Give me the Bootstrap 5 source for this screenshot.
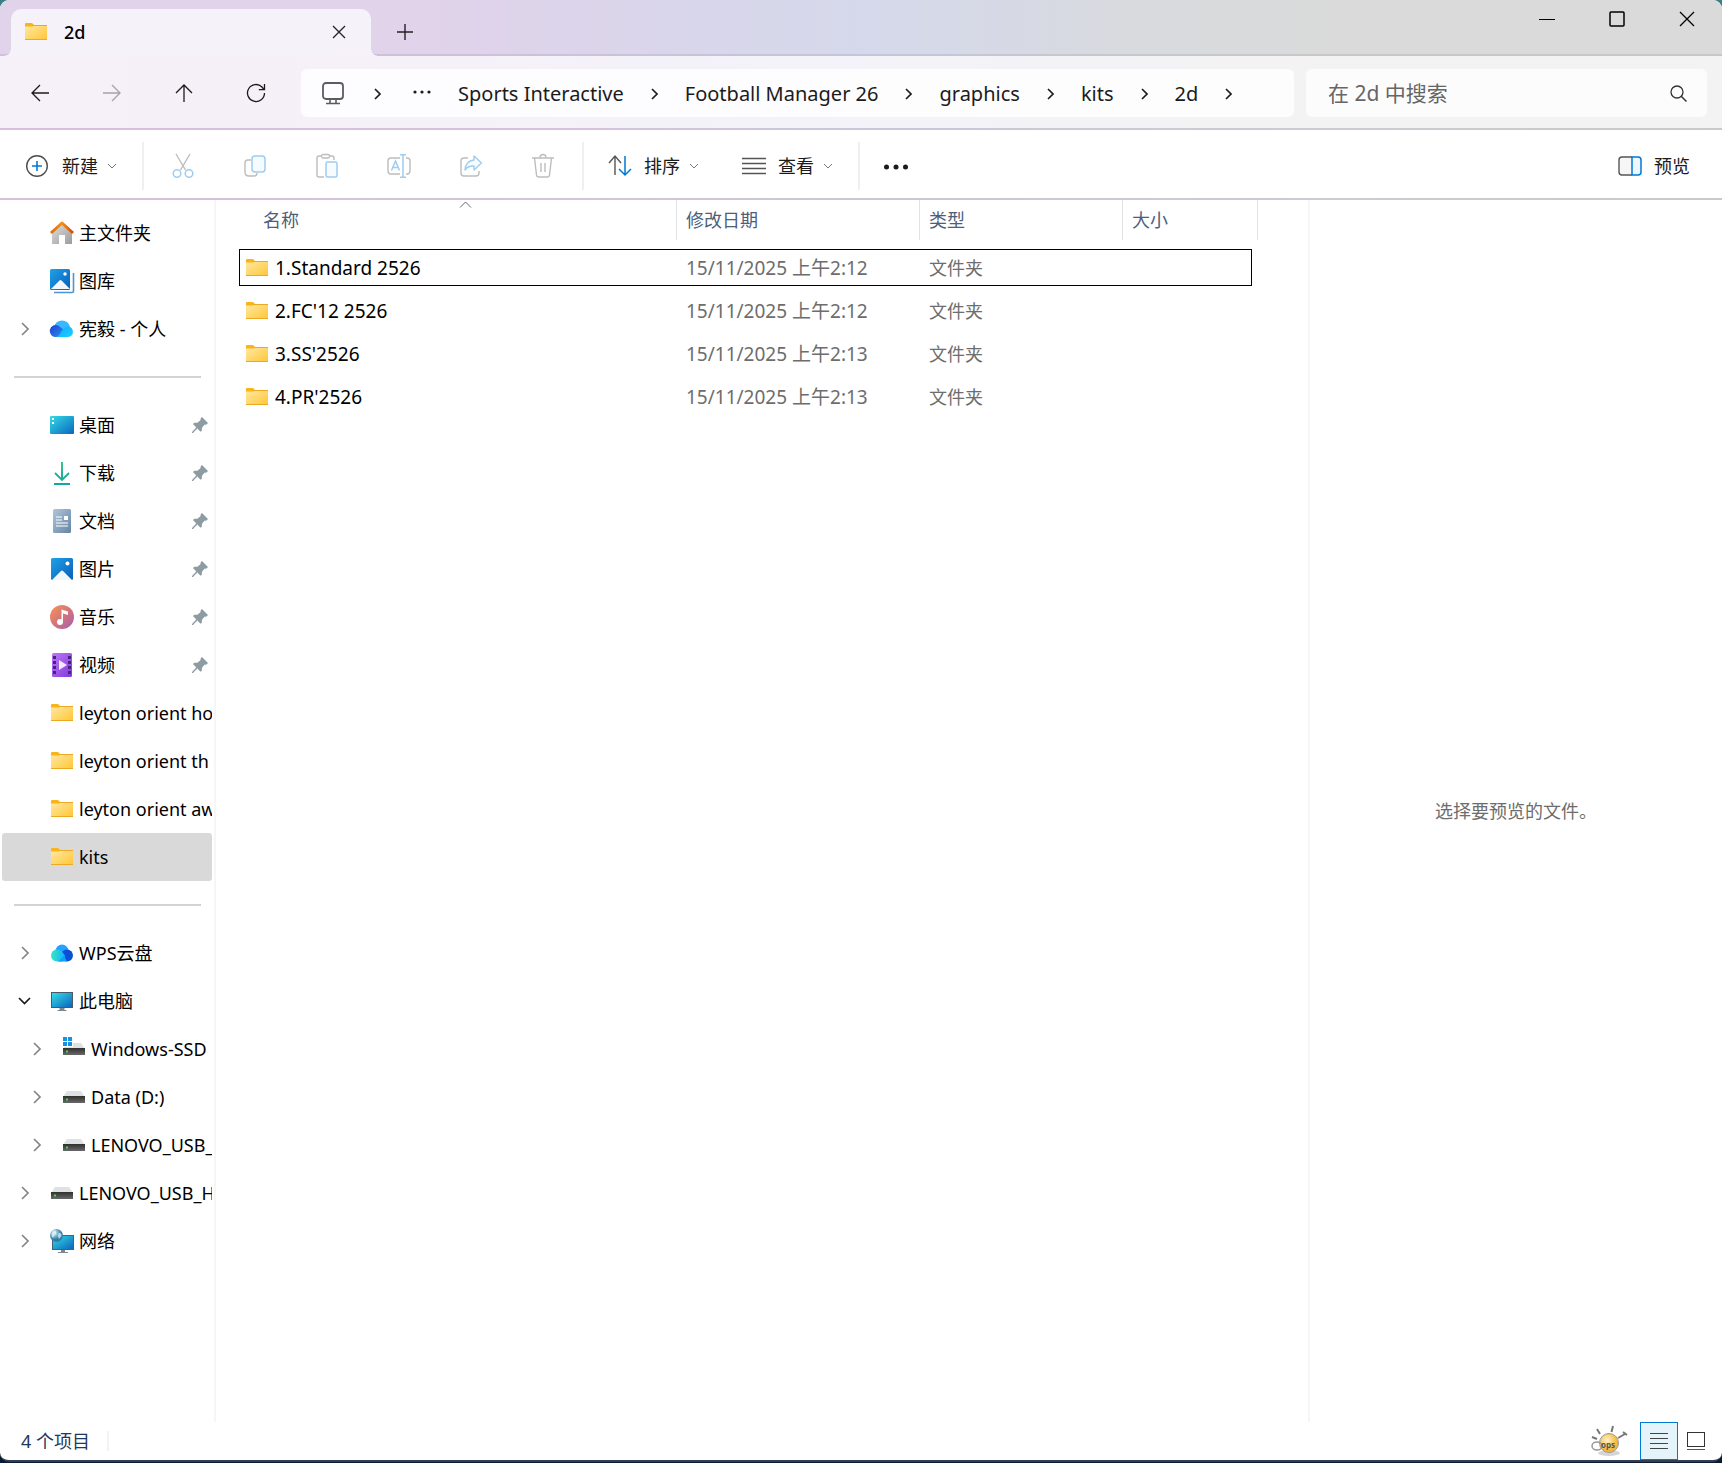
<!DOCTYPE html>
<html lang="zh-CN">
<head>
<meta charset="utf-8">
<meta name="viewport" content="width=device-width, initial-scale=1">
<title>2d</title>
<link rel="stylesheet" href="https://cdn.jsdelivr.net/npm/bootstrap@5.3.0/dist/css/bootstrap.min.css">
<style>
:root{--ui:"Noto Sans","Noto Sans CJK SC",sans-serif}
body{font-family:var(--ui);font-size:18px;line-height:24px;color:#000;background:linear-gradient(#3a7f86,#0b1a33 80%)}
svg{display:block;flex:none;overflow:visible}
.desk{min-height:100vh}
.win{background:#fff;border-radius:9px;overflow:hidden;margin-bottom:1px;border-bottom:2px solid #333f50}
.plain{background:none;border:0;padding:0;color:#1b1b1b}
.tabstrip{height:56px;background:linear-gradient(90deg,#e1d3ea 0,#e0d3ea 25%,#d9d6ea 40%,#d5d9eb 51%,#d8dade 66%,#dadada 78%);box-shadow:inset 0 -2px rgba(90,60,100,.12)}
.tabitem{width:360px;height:47px;margin-left:11px;background:#f5f2f9;border-radius:10px 10px 0 0;position:relative;padding:0 25px 1px 13px}
.tabitem::before,.tabitem::after{content:"";position:absolute;bottom:0;width:6px;height:6px}
.tabitem::before{left:-6px;background:radial-gradient(circle at 0 0,transparent 5px,#f5f2f9 6px)}
.tabitem::after{right:-6px;background:radial-gradient(circle at 100% 0,transparent 5px,#f5f2f9 6px)}
.tabname{font-weight:500}
.newtab{margin-left:26px}
.wbtn{width:70px;height:37px}
.navrow{height:74px;background:linear-gradient(90deg,#f6f0f8 0,#f5f1f9 25%,#f3f3f9 50%,#f3f3f3 78%);padding:2px 15px 0 4px}
.navrow,.toolrow{border-bottom:2px solid;border-image:linear-gradient(90deg,#d8bfdb 0,#d6c2dc 33%,#c8c8d8 52%,#c8ccd2 70%,#cacacc) 1}
.toolrow{height:70px;padding:4px 32px 0 26px}
.ibtn{width:72px;height:48px}
.addr{height:48px;background:rgba(255,255,255,.78);border-radius:6px;padding:2px 0 0 21px;margin:0 12px 0 9px;font-size:20px}
.addr a{color:#1b1b1b;text-decoration:none;white-space:nowrap}
.addr .gap-chev{margin:0 27px}
.dots{margin:0 27px}
.seek{width:401px;height:48px;background:#fcfcfc;border-radius:6px;padding:0 20px 0 22px}
.seek input{border:0;background:none;padding:0;outline:0;font-size:21px;min-width:0;color:#1b1b1b}
.seek input::placeholder{color:#666;opacity:1}
.vbar{width:2px;height:48px;background:#efefef}
.wide{margin-left:26px}
.tight{margin-left:3px}
.tlabel{margin:0 10px 0 14px}
.slabel{margin:0 10px 0 12px}
.viewb{margin-left:44px}
.side{width:216px;padding:9px 2px 0;border-right:2px solid #f6f6f6}
.side li{height:48px}
.side a{height:48px;color:#000;text-decoration:none;overflow:hidden;border-radius:3px;padding-right:4px;white-space:nowrap}
.side a.here{background:#d9d9d9}
.chev{width:48px;padding-left:19px;flex:none}
.chev.open{padding-left:16px}
.sub .chev{width:60px;padding-left:31px}
.ic{width:24px;margin-right:5px}
.side a.clip{padding-right:0}
.side hr{margin:0 11px 0 12px;border-top:2px solid #d3d3d3;opacity:1}
.listing{padding-left:20px}
.files{width:1019px;table-layout:fixed;border-collapse:collapse}
.c1{width:441px}.c2{width:243px}.c3{width:203px}.c4{width:132px}
.files th{padding:0 0 6px;font-weight:400;color:#4c607a}
.hcell{height:40px;border-right:1px solid #e3e3e3;padding-left:9px;position:relative}
.hfirst{margin-left:18px}
.hlast{margin-right:-3px}
.caret{position:absolute;left:50%;top:1px;margin-left:-5px}
.files td{height:43px;padding:0 0 0 9px;color:#6d6d6d;font-size:19px}
.files td.nm{color:#000}
.files .nm .ic{margin-right:6px}
.files td.kind{font-size:18px}
.files tr.focus{outline:1px solid #000;outline-offset:-4px}
.pane{width:414px;border-left:2px solid #f6f6f6;color:#6d6d6d}
.stat{height:38px;color:#1e395b;padding:0 17px 0 21px}
.stat .tick{width:2px;height:20px;background:#f3f3f3;margin-left:17px}
.oops{margin-right:12px}
.vbtn{width:38px;height:38px;margin-right:9px}
.vbtn.on{background:#e5f3fb;border:1px solid #0078d4}
</style>
</head>
<body>
<svg width="0" height="0" class="position-absolute" aria-hidden="true">
<defs>
<linearGradient id="gf" x1="0" y1="0" x2="1" y2="1"><stop offset="0" stop-color="#ffe9a6"/><stop offset="1" stop-color="#ffc634"/></linearGradient>
<linearGradient id="gb" x1="0" y1="0" x2="1" y2="1"><stop offset="0" stop-color="#1fa2e8"/><stop offset="1" stop-color="#0a5db8"/></linearGradient>
<linearGradient id="gt" x1="0" y1="0" x2="1" y2="1"><stop offset="0" stop-color="#35dbe6"/><stop offset="1" stop-color="#0a66bd"/></linearGradient>
<linearGradient id="gg" x1="0" y1="0" x2="0" y2="1"><stop offset="0" stop-color="#3ac28c"/><stop offset="1" stop-color="#10a6a0"/></linearGradient>
<linearGradient id="gd" x1="0" y1="0" x2="1" y2="1"><stop offset="0" stop-color="#b2c6da"/><stop offset="1" stop-color="#6484a4"/></linearGradient>
<linearGradient id="gm" x1="0" y1="0" x2="1" y2="1"><stop offset="0" stop-color="#f99555"/><stop offset=".5" stop-color="#d67478"/><stop offset="1" stop-color="#a05fb5"/></linearGradient>
<linearGradient id="gv" x1="0" y1="0" x2="1" y2="1"><stop offset="0" stop-color="#bb79f5"/><stop offset="1" stop-color="#8238dd"/></linearGradient>
<linearGradient id="gh" x1="0" y1="0" x2="1" y2="1"><stop offset="0" stop-color="#dedede"/><stop offset="1" stop-color="#9b9b9b"/></linearGradient>
<linearGradient id="gr" x1="0" y1="0" x2="1" y2="0"><stop offset="0" stop-color="#e06a12"/><stop offset=".5" stop-color="#fa8c12"/><stop offset="1" stop-color="#d24a0e"/></linearGradient>
<linearGradient id="gc" x1="0" y1="0" x2="1" y2="0"><stop offset="0" stop-color="#38e6c0"/><stop offset="1" stop-color="#12b2ff"/></linearGradient>
<linearGradient id="gk" x1="0" y1="0" x2="0" y2="1"><stop offset="0" stop-color="#2f2f2f"/><stop offset="1" stop-color="#6a6a6a"/></linearGradient>
<linearGradient id="go" x1="0" y1="0" x2="1" y2="1"><stop offset="0" stop-color="#1d43c8"/><stop offset="1" stop-color="#2e8cff"/></linearGradient>
<linearGradient id="gp" x1="0" y1="0" x2="1" y2="1"><stop offset="0" stop-color="#18a4ff"/><stop offset="1" stop-color="#14d4ff"/></linearGradient>
<radialGradient id="gball" cx=".4" cy=".35"><stop offset="0" stop-color="#fff3c8"/><stop offset="1" stop-color="#f4b840"/></radialGradient>
<radialGradient id="gglobe" cx=".35" cy=".3"><stop offset="0" stop-color="#d8f0fa"/><stop offset="1" stop-color="#2e7fa8"/></radialGradient>
</defs>
<symbol id="folder" viewBox="0 0 24 24"><path d="M1 4q0-1 1-1h6l2 2v3H1z" fill="#f9b516"/><path d="M1 6.500h8l1-1.500h13v15H1z" fill="url(#gf)"/><path d="M9 5.500h14M1 19.500h22" stroke="#eba924"/></symbol>
<symbol id="right" viewBox="0 0 8 14"><path d="M1 1l6 6-6 6" fill="none" stroke="#858585" stroke-width="1.600"/></symbol>
<symbol id="crumb" viewBox="0 0 7 12"><path d="M1 1l5 5-5 5" fill="none" stroke="#1b1b1b" stroke-width="1.600"/></symbol>
<symbol id="dropd" viewBox="0 0 8 6"><path d="M0 1l4 4 4-4" fill="none" stroke="#777"/></symbol>
<symbol id="pin" viewBox="0 0 16 16"><path d="M10 0l6 6-1.500 1.500-2 .3-2.500 3-.2 3-1.300 1L5.300 11.500 1 16H0v-1l4.300-4.500L1 7l1.300-1.200h3l3.200-2.600.2-2z" fill="#8f9ba3"/></symbol>
<symbol id="drive" viewBox="0 0 24 24"><path d="M5 6h14l4 6H1z" fill="#dfe1e4"/><path d="M1 11h22v7H1z" fill="url(#gk)"/><path d="M4 13.500h2v2H4z" fill="#35e03a"/></symbol>
<symbol id="screen" viewBox="0 0 24 24"><path d="M1 3h22v16H1z" fill="#4b5a68"/><path d="M2 4h20v14H2z" fill="url(#gt)"/><path d="M9.500 19h5v2h2v1h-9v-1h2z" fill="#7c8790"/></symbol>
<symbol id="pic" viewBox="0 0 24 24"><rect x="1" y="1" width="22" height="22" rx="1.500" fill="url(#gb)"/><path d="M2 23l9-9q1-1 2 0l9 9z" fill="#f1f7fd"/><circle cx="17.500" cy="6.500" r="2" fill="#fff"/></symbol>
</svg>

<div class="desk d-flex flex-column">
<div class="win d-flex flex-column flex-grow-1">

<header>
<div class="tabstrip d-flex align-items-end">
  <div class="tabitem d-flex align-items-center">
    <svg width="24" height="24"><use href="#folder"/></svg>
    <span class="tabname ms-3 flex-grow-1">2d</span>
    <button class="plain" aria-label="关闭标签页"><svg width="14" height="14"><path d="M1 1l12 12M13 1L1 13" stroke="#222" stroke-width="1.300"/></svg></button>
  </div>
  <button class="plain newtab pb-3" aria-label="新标签页"><svg width="16" height="16"><path d="M8 0v16M0 8h16" stroke="#222" stroke-width="1.400"/></svg></button>
  <div class="ms-auto d-flex align-self-start">
    <button class="wbtn plain d-flex align-items-center justify-content-center" aria-label="最小化"><svg width="16" height="16"><path d="M0 8.500h16" stroke="#000"/></svg></button>
    <button class="wbtn plain d-flex align-items-center justify-content-center" aria-label="最大化"><svg width="16" height="16"><rect x="1" y="1" width="14" height="14" rx="1" fill="none" stroke="#000" stroke-width="1.500"/></svg></button>
    <button class="wbtn plain d-flex align-items-center justify-content-center" aria-label="关闭"><svg width="16" height="16"><path d="M1 1l14 14M15 1L1 15" stroke="#000" stroke-width="1.300"/></svg></button>
  </div>
</div>

<div class="navrow d-flex align-items-center">
  <div class="d-flex">
    <button class="ibtn plain d-flex align-items-center justify-content-center" aria-label="后退"><svg width="18" height="18"><path d="M9 1L1 9l8 8M1 9h17" fill="none" stroke="#1b1b1b" stroke-width="1.300"/></svg></button>
    <button class="ibtn plain d-flex align-items-center justify-content-center" aria-label="前进" disabled><svg width="18" height="18"><path d="M9 1l8 8-8 8M17 9H0" fill="none" stroke="#a5a1a7" stroke-width="1.300"/></svg></button>
    <button class="ibtn plain d-flex align-items-center justify-content-center" aria-label="向上"><svg width="18" height="18"><path d="M1 9l8-8 8 8M9 1v17" fill="none" stroke="#1b1b1b" stroke-width="1.300"/></svg></button>
    <button class="ibtn plain d-flex align-items-center justify-content-center" aria-label="刷新"><svg width="18" height="18"><path d="M17.500 9A8.500 8.500 0 1 1 15 3l2 2.500M17.500 0v5.700h-5.700" fill="none" stroke="#1b1b1b" stroke-width="1.300"/></svg></button>
  </div>
  <nav class="addr d-flex align-items-center flex-grow-1" aria-label="路径">
    <svg width="22" height="24"><rect x="1" y="1" width="20" height="16" rx="3" fill="none" stroke="#5c5c60" stroke-width="1.800"/><path d="M8 17v4M14 17v4M4 21.500h14" stroke="#5c5c60" stroke-width="1.600"/></svg>
    <svg class="ms-4" width="18" height="12"><path d="M7 1l5 5-5 5" fill="none" stroke="#1b1b1b" stroke-width="1.700"/></svg>
    <svg class="dots" width="18" height="18"><g fill="#1b1b1b"><circle cx="2" cy="7" r="1.600"/><circle cx="9" cy="7" r="1.600"/><circle cx="16" cy="7" r="1.600"/></g></svg>
    <a href="#">Sports Interactive</a><svg class="gap-chev" width="7" height="12"><use href="#crumb"/></svg>
    <a href="#">Football Manager 26</a><svg class="gap-chev" width="7" height="12"><use href="#crumb"/></svg>
    <a href="#">graphics</a><svg class="gap-chev" width="7" height="12"><use href="#crumb"/></svg>
    <a href="#">kits</a><svg class="gap-chev" width="7" height="12"><use href="#crumb"/></svg>
    <a href="#">2d</a><svg class="gap-chev" width="7" height="12"><use href="#crumb"/></svg>
  </nav>
  <form class="seek d-flex align-items-center" role="search">
    <input class="flex-grow-1" type="text" placeholder="在 2d 中搜索" aria-label="在 2d 中搜索">
    <svg width="17" height="17"><circle cx="7" cy="7" r="6" fill="none" stroke="#333" stroke-width="1.300"/><path d="M11 11l5.500 5.500" stroke="#333" stroke-width="1.500"/></svg>
  </form>
</div>

<div class="toolrow d-flex align-items-center">
  <button class="plain d-flex align-items-center"><svg width="22" height="22"><circle cx="11" cy="11" r="10.300" fill="none" stroke="#4e4e4e" stroke-width="1.400"/><path d="M11 6v10M6 11h10" stroke="#0078d4" stroke-width="1.600"/></svg><span class="tlabel">新建</span><svg width="8" height="6"><use href="#dropd"/></svg></button>
  <div class="vbar wide"></div>
  <div class="d-flex tight">
    <button class="ibtn plain d-flex align-items-center justify-content-center" aria-label="剪切" disabled><svg width="22" height="24"><path d="M4 0l9.500 16M18 0L8.500 16" stroke="#bdbdbd" stroke-width="1.400"/><g fill="none" stroke="#9fcdf0" stroke-width="1.500"><circle cx="5" cy="19.500" r="3.800"/><circle cx="17" cy="19.500" r="3.800"/></g></svg></button>
    <button class="ibtn plain d-flex align-items-center justify-content-center" aria-label="复制" disabled><svg width="22" height="24"><path d="M7 6H4q-3 0-3 3v9q0 4 4 4h5q3 0 3-3" fill="none" stroke="#bdbdbd" stroke-width="1.400"/><rect x="8" y="2" width="13" height="16" rx="3" fill="#f6fbff" stroke="#9fcdf0" stroke-width="1.500"/></svg></button>
    <button class="ibtn plain d-flex align-items-center justify-content-center" aria-label="粘贴" disabled><svg width="22" height="24"><path d="M5 2H3Q1 2 1 4v17q0 2 2 2h5M14 2h2q2 0 2 2v2" fill="none" stroke="#bdbdbd" stroke-width="1.400"/><rect x="5.500" y=".5" width="8" height="3.500" rx="1.500" fill="none" stroke="#bdbdbd" stroke-width="1.300"/><rect x="10" y="8" width="11" height="15" rx="1.500" fill="#f6fbff" stroke="#9fcdf0" stroke-width="1.500"/></svg></button>
    <button class="ibtn plain d-flex align-items-center justify-content-center" aria-label="重命名" disabled><svg width="24" height="24"><path d="M13 4H4Q1 4 1 7v10q0 3 3 3h9M19 4h1q3 0 3 3v10q0 3-3 3h-1" fill="none" stroke="#bdbdbd" stroke-width="1.400"/><path d="M4.500 16.500L8.500 7l4 9.500M6 13.500h5M16 .8v22.400M13 .8h6M13 23.200h6" fill="none" stroke="#9fcdf0" stroke-width="1.500"/></svg></button>
    <button class="ibtn plain d-flex align-items-center justify-content-center" aria-label="共享" disabled><svg width="22" height="24"><path d="M8 4H4Q1 4 1 7v12q0 3 3 3h12q3 0 3-3v-2" fill="none" stroke="#bdbdbd" stroke-width="1.400"/><path d="M14 2l7.500 7-7.500 7v-4q-6-.5-9 4 .5-9 9-10z" fill="#f6fbff" stroke="#9fcdf0" stroke-width="1.400" stroke-linejoin="round"/></svg></button>
    <button class="ibtn plain d-flex align-items-center justify-content-center" aria-label="删除" disabled><svg width="22" height="24"><path d="M0 4h22M2.500 4l2 17q.3 2 2.500 2h8q2.200 0 2.500-2l2-17M8 4q0-3.500 3-3.500T14 4M9 9v9M13 9v9" fill="none" stroke="#bdbdbd" stroke-width="1.400"/></svg></button>
  </div>
  <div class="vbar tight"></div>
  <button class="plain d-flex align-items-center ms-4"><svg width="24" height="22"><path d="M1 8l6-7 6 7M7 1v19" fill="none" stroke="#555" stroke-width="1.400"/><path d="M11 14l6 6 6-6M17 1v19" fill="none" stroke="#0078d4" stroke-width="1.500"/></svg><span class="slabel">排序</span><svg width="8" height="6"><use href="#dropd"/></svg></button>
  <button class="plain d-flex align-items-center viewb"><svg width="24" height="18"><path d="M0 1.500h24M0 6.500h24M0 11.500h24M0 16.500h24" stroke="#555" stroke-width="1.300"/></svg><span class="slabel">查看</span><svg width="8" height="6"><use href="#dropd"/></svg></button>
  <div class="vbar wide"></div>
  <button class="plain ms-4" aria-label="查看更多"><svg width="24" height="6"><g fill="#1b1b1b"><circle cx="2.500" cy="4" r="2.500"/><circle cx="12" cy="4" r="2.500"/><circle cx="21.500" cy="4" r="2.500"/></g></svg></button>
  <button class="plain d-flex align-items-center ms-auto"><svg width="24" height="20"><path d="M14 1H4Q1 1 1 4v12q0 3 3 3h10" fill="#f6f6f6" stroke="#555" stroke-width="1.400"/><path d="M14 1h6q3 0 3 3v12q0 3-3 3h-6z" fill="#eef7ff" stroke="#0078d4" stroke-width="1.500"/></svg><span class="slabel me-0">预览</span></button>
</div>
</header>

<div class="d-flex flex-grow-1">
<nav class="side flex-shrink-0" aria-label="导航窗格">
<ul class="list-unstyled mb-0">
<li><a class="d-flex align-items-center" href="#"><span class="chev"></span><svg class="ic" height="24"><path d="M2 11v12h7v-9h6v9h7V11L12 3z" fill="url(#gh)"/><path d="M1 12L12 2l11 10" fill="none" stroke="url(#gr)" stroke-width="3" stroke-linejoin="round"/></svg>主文件夹</a></li>
<li><a class="d-flex align-items-center" href="#"><span class="chev"></span><svg class="ic" height="24"><path d="M4 23.500h18q1.500 0 1.500-1.500V4" fill="none" stroke="#4c94d4" stroke-width="1.600"/><rect width="20" height="21" rx="1.500" fill="url(#gb)"/><path d="M1 20l8.500-8.500q1-1 2 0L20 20z" fill="#f1f7fd"/><circle cx="15" cy="5" r="1.700" fill="#fff"/></svg>图库</a></li>
<li><a class="d-flex align-items-center" href="#"><span class="chev"><svg width="8" height="14"><use href="#right"/></svg></span><svg class="ic" height="24"><path d="M5 20a5.500 5.500 0 0 1-1-10.500Q6 3.500 12 3.500t8 6l-8 10.500z" fill="#3ab8ff"/><path d="M6 20a6 6 0 1 1 2.500-11.300L14 13l-5 7z" fill="url(#go)"/><path d="M6 20q3-.5 5-5t7-5.500a5.300 5.300 0 0 1 .5 10.500z" fill="url(#gp)"/></svg>宪毅 - 个人</a></li>
<li class="d-flex flex-column justify-content-center"><hr></li>
<li><a class="d-flex align-items-center" href="#"><span class="chev"></span><svg class="ic" height="24"><rect y="3" width="24" height="18" rx="1" fill="url(#gt)"/><path d="M2 5h2v2H2zM2 9h2v2H2z" fill="#fff"/></svg>桌面<svg class="ms-auto" width="16" height="16"><use href="#pin"/></svg></a></li>
<li><a class="d-flex align-items-center" href="#"><span class="chev"></span><svg class="ic" height="24"><path d="M11 1h2v17h-2zM4 22h16v2H4z" fill="url(#gg)"/><path d="M5 12l7 7 7-7" fill="none" stroke="#1fae95" stroke-width="1.800"/></svg>下载<svg class="ms-auto" width="16" height="16"><use href="#pin"/></svg></a></li>
<li><a class="d-flex align-items-center" href="#"><span class="chev"></span><svg class="ic" height="24"><rect x="3" width="18" height="24" rx="1.500" fill="url(#gd)"/><path d="M6 8h6M6 11h6M6 14h12M6 17h12" stroke="#fff" stroke-width="1.200"/><path d="M14 7h4v4h-4z" fill="#fff"/></svg>文档<svg class="ms-auto" width="16" height="16"><use href="#pin"/></svg></a></li>
<li><a class="d-flex align-items-center" href="#"><span class="chev"></span><svg class="ic" height="24"><use href="#pic"/></svg>图片<svg class="ms-auto" width="16" height="16"><use href="#pin"/></svg></a></li>
<li><a class="d-flex align-items-center" href="#"><span class="chev"></span><svg class="ic" height="24"><circle cx="12" cy="12" r="12" fill="url(#gm)"/><circle cx="10" cy="17" r="3" fill="#fff"/><path d="M11.500 17V4.500l6.500 2v3.500l-5-1.500V17z" fill="#fff"/></svg>音乐<svg class="ms-auto" width="16" height="16"><use href="#pin"/></svg></a></li>
<li><a class="d-flex align-items-center" href="#"><span class="chev"></span><svg class="ic" height="24"><rect x="2" width="20" height="24" rx="1.500" fill="url(#gv)"/><path d="M4.500 3v20M19.500 3v20" stroke="#4a2180" stroke-width="3" stroke-dasharray="3 2"/><path d="M9 7l8 5-8 5z" fill="#f3eafc"/></svg>视频<svg class="ms-auto" width="16" height="16"><use href="#pin"/></svg></a></li>
<li><a class="clip d-flex align-items-center" href="#"><span class="chev"></span><svg class="ic" height="24"><use href="#folder"/></svg>leyton orient ho</a></li>
<li><a class="clip d-flex align-items-center" href="#"><span class="chev"></span><svg class="ic" height="24"><use href="#folder"/></svg>leyton orient th</a></li>
<li><a class="clip d-flex align-items-center" href="#"><span class="chev"></span><svg class="ic" height="24"><use href="#folder"/></svg>leyton orient aw</a></li>
<li><a class="here d-flex align-items-center" href="#" aria-current="page"><span class="chev"></span><svg class="ic" height="24"><use href="#folder"/></svg>kits</a></li>
<li class="d-flex flex-column justify-content-center"><hr></li>
<li><a class="d-flex align-items-center" href="#"><span class="chev"><svg width="8" height="14"><use href="#right"/></svg></span><svg class="ic" height="24"><circle cx="12" cy="10" r="6.500" fill="#23a3ff"/><circle cx="17" cy="14.500" r="6" fill="#0a50d6"/><path d="M7 8.500a6 6 0 1 0 0 12h6l2-6-3.500-4.500Q9.500 8.500 7 8.500z" fill="url(#gc)"/><path d="M8 20.500h9l-3-6z" fill="#12a0ff"/></svg>WPS云盘</a></li>
<li><a class="d-flex align-items-center" href="#"><span class="chev open"><svg width="13" height="8"><path d="M1 1l5.500 5.500L12 1" fill="none" stroke="#1b1b1b" stroke-width="1.700"/></svg></span><svg class="ic" height="24"><use href="#screen"/></svg>此电脑</a></li>
<li class="sub"><a class="clip d-flex align-items-center" href="#"><span class="chev"><svg width="8" height="14"><use href="#right"/></svg></span><svg class="ic" height="24"><use href="#drive"/><path d="M0 0h11v10H0z" fill="#fff"/><path d="M1 0h4v4H1zM6 0h4v4H6zM1 5h4v4H1zM6 5h4v4H6z" fill="#1593e0"/></svg>Windows-SSD</a></li>
<li class="sub"><a class="d-flex align-items-center" href="#"><span class="chev"><svg width="8" height="14"><use href="#right"/></svg></span><svg class="ic" height="24"><use href="#drive"/></svg>Data (D:)</a></li>
<li class="sub"><a class="clip d-flex align-items-center" href="#"><span class="chev"><svg width="8" height="14"><use href="#right"/></svg></span><svg class="ic" height="24"><use href="#drive"/></svg>LENOVO_USB_</a></li>
<li><a class="clip d-flex align-items-center" href="#"><span class="chev"><svg width="8" height="14"><use href="#right"/></svg></span><svg class="ic" height="24"><use href="#drive"/></svg>LENOVO_USB_H</a></li>
<li><a class="d-flex align-items-center" href="#"><span class="chev"><svg width="8" height="14"><use href="#right"/></svg></span><svg class="ic" height="24"><path d="M2 6h22v15H2z" fill="#4b6070"/><path d="M3 7h20v13H3z" fill="url(#gt)"/><path d="M11 21h4v2h3v1H8v-1h3z" fill="#7c8790"/><circle cx="6.500" cy="6.500" r="6.500" fill="url(#gglobe)"/><path d="M3 2q3-2 3 1t-1 3-2 3Q0 6 3 2zM9 4q3 0 2.500 3L9 10q-2-4 0-6z" fill="#e8f6fb" opacity=".7"/></svg>网络</a></li>
</ul>
</nav>

<main class="listing flex-grow-1">
<table class="files">
<colgroup><col class="c1"><col class="c2"><col class="c3"><col class="c4"></colgroup>
<thead><tr>
<th scope="col"><div class="hcell hfirst d-flex align-items-center">名称<svg class="caret" width="11" height="7"><path d="M0 6.500l5.500-5.500L11 6.500" fill="none" stroke="#666"/></svg></div></th>
<th scope="col"><div class="hcell d-flex align-items-center">修改日期</div></th>
<th scope="col"><div class="hcell d-flex align-items-center">类型</div></th>
<th scope="col"><div class="hcell hlast d-flex align-items-center">大小</div></th>
</tr></thead>
<tbody>
<tr class="focus"><td class="nm"><div class="d-flex align-items-center"><svg class="ic" height="24"><use href="#folder"/></svg>1.Standard 2526</div></td><td>15/11/2025 上午2:12</td><td class="kind">文件夹</td><td></td></tr>
<tr><td class="nm"><div class="d-flex align-items-center"><svg class="ic" height="24"><use href="#folder"/></svg>2.FC'12 2526</div></td><td>15/11/2025 上午2:12</td><td class="kind">文件夹</td><td></td></tr>
<tr><td class="nm"><div class="d-flex align-items-center"><svg class="ic" height="24"><use href="#folder"/></svg>3.SS'2526</div></td><td>15/11/2025 上午2:13</td><td class="kind">文件夹</td><td></td></tr>
<tr><td class="nm"><div class="d-flex align-items-center"><svg class="ic" height="24"><use href="#folder"/></svg>4.PR'2526</div></td><td>15/11/2025 上午2:13</td><td class="kind">文件夹</td><td></td></tr>
</tbody>
</table>
</main>

<aside class="pane flex-shrink-0 d-flex align-items-center justify-content-center">选择要预览的文件。</aside>
</div>

<footer class="stat d-flex align-items-center">
  <span>4 个项目</span><span class="tick"></span>
  <svg class="oops ms-auto" width="36" height="32"><ellipse cx="17" cy="28" rx="11" ry="3" fill="#d5d5d5"/><circle cx="17" cy="18" r="9.500" fill="url(#gball)" stroke="#999"/><path d="M5 4l3 5M21 1l-1.500 6M0 12l5 2M26 13l7-4M31 7l4 3" stroke="#777" stroke-width="2" fill="none"/><ellipse cx="5" cy="21" rx="5" ry="4" fill="none" stroke="#999" stroke-width="1.500"/><text x="9" y="23" font-size="8" font-weight="700" fill="#555" font-family="Open Sans, sans-serif">ops</text></svg>
  <button class="vbtn on plain d-flex align-items-center justify-content-center" aria-label="详细信息"><svg width="18" height="16"><path d="M0 .5h18M0 5.500h18M0 10.500h18M0 15.500h18" stroke="#444"/></svg></button>
  <button class="plain" aria-label="大缩略图"><svg width="18" height="18"><rect x=".5" y=".5" width="17" height="14" fill="none" stroke="#333"/><path d="M0 17.500h18" stroke="#555"/></svg></button>
</footer>
</div>
</div>
<script src="https://cdn.jsdelivr.net/npm/bootstrap@5.3.0/dist/js/bootstrap.bundle.min.js"></script>
</body>
</html>
